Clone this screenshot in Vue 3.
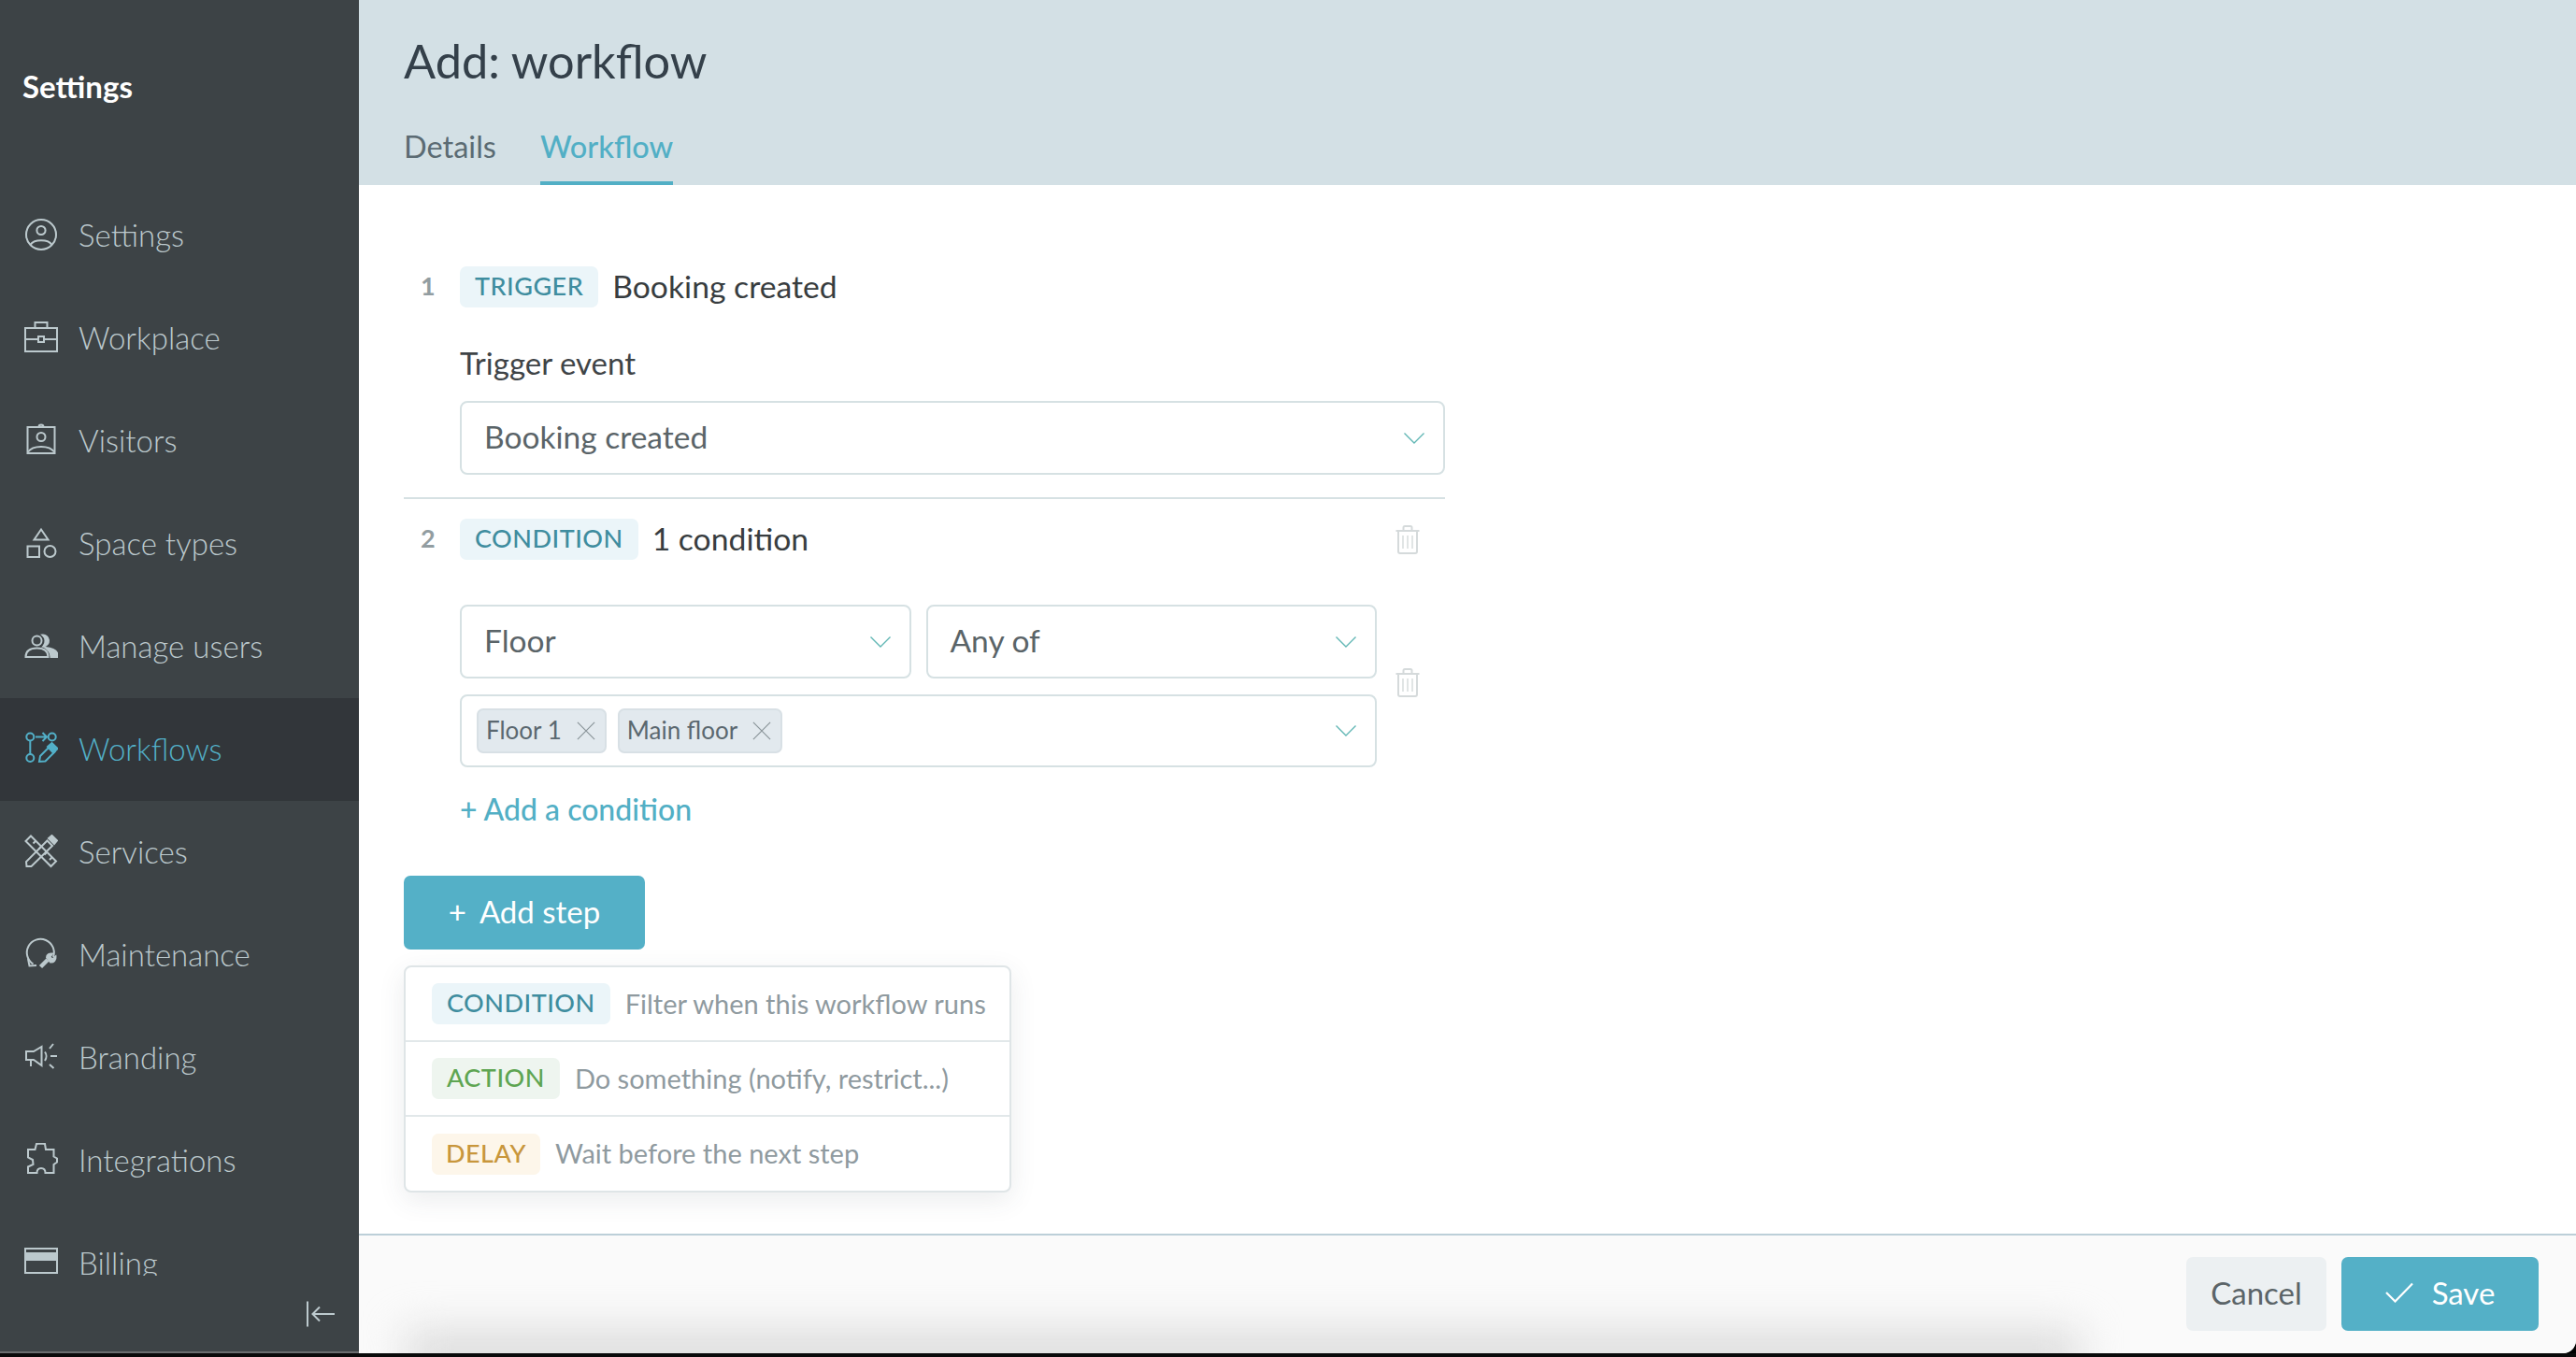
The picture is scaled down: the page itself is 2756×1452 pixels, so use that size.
<script setup>
const circle = (cx, cy, r) => `M${cx - r} ${cy}a${r} ${r} 0 1 0 ${2 * r} 0a${r} ${r} 0 1 0 ${-2 * r} 0Z`

const navItems = [
  { label: 'Settings', paths: [{ d: circle(18, 18, 16) }, { d: circle(18, 13.5, 4.6) }, { d: 'M6.5 29C10 22.5 26 22.5 29.5 29' }] },
  { label: 'Workplace', paths: [{ d: 'M1 8H35V33H1Z' }, { d: 'M11.5 8V2H24.5V8' }, { d: 'M1 20H15M21 20H35' }, { d: 'M15 17H21V23H15Z' }] },
  { label: 'Visitors', paths: [{ d: 'M3.5 4H32.5V32H3.5Z' }, { d: 'M15.5 4a2.5 2.5 0 0 1 5 0' }, { d: circle(18, 14.5, 4.5) }, { d: 'M4 30.5C9 23 27 23 32 30.5' }] },
  { label: 'Space types', paths: [{ d: 'M18 3.5L25.5 14.5H10.5Z' }, { d: 'M3.5 21.5H16V33H3.5Z' }, { d: circle(27.5, 27, 6) }] },
  { label: 'Manage users', paths: [{ d: circle(13.5, 12.5, 5) }, { d: 'M1.5 30C1.5 23 7 20.5 13.5 20.5C20 20.5 25.5 23 25.5 30Z' }, { d: 'M19.5 6.5a6 6 0 0 1 1 12a8.5 8.5 0 0 0 -1 -12Z', filled: true }, { d: 'M22.5 20C31 20.5 36 24 36 30H28.5C28.5 26 26 22.5 22.5 20Z', filled: true }] },
  { label: 'Workflows', active: true, paths: [{ d: circle(6.3, 5.5, 4) }, { d: circle(6.3, 28, 4) }, { d: circle(29.7, 5.5, 4) }, { d: 'M6.3 9.5V24' }, { d: 'M12 5.5H24M19.5 1L24 5.5L19.5 10' }, { d: 'M16 32L17 26L27 16L32.5 21.5L22.5 31.5Z' }, { d: 'M25 16L29.5 12L35.5 18L31 22.5Z', filled: true }] },
  { label: 'Services', paths: [{ d: 'M7 1.5L34 28.5L28.5 34L1.5 7Z' }, { d: 'M9.5 9.5L12.5 6.5M15.5 15.5L18.5 12.5M21.5 21.5L24.5 18.5M27 27L30 24' }, { d: 'M2 29L2.5 34L7.5 34L30 12L24.5 6.5Z' }, { d: 'M26 4L29.5 1L35 6.5L32 10Z', filled: true }] },
  { label: 'Maintenance', paths: [{ d: 'M9.5 28.5A14.5 14.5 0 1 1 31 21' }, { d: 'M4 23L5.5 30.5L13 30' }, { d: 'M17.5 31.5L25 24', wide: true }, { d: 'M24 21.5C24 18.5 27 17 30 17.5L27.5 21L30 23.5L33.5 20.5C34 24 31.5 27 28 26.5Z', filled: true }] },
  { label: 'Branding', paths: [{ d: 'M2 12H10L18.5 7V27L10 21H2Z' }, { d: 'M7 21V28' }, { d: 'M22 12.5C24 15 24 19 22 22' }, { d: 'M27 9L31 4M28 17H35M27 26L31.5 30' }] },
  { label: 'Integrations', paths: [{ d: 'M4 7H11.5L13 1L18 0.5L22 1L23 7H31.5V14.5L35 16.5V20.5L31.5 23V32H22.5C22.5 28 20.5 27 18 27C15.5 27 13.5 28 13.5 32H4V25.5L9.5 23L9 18L4 15.5Z' }] },
  { label: 'Billing', paths: [{ d: 'M1 3H35V29H1Z' }, { d: 'M1 8H35V15H1Z', filled: true }] },
]

const menu = [
  { tag: 'CONDITION', kind: 'condition', text: 'Filter when this workflow runs' },
  { tag: 'ACTION', kind: 'action', text: 'Do something (notify, restrict...)' },
  { tag: 'DELAY', kind: 'delay', text: 'Wait before the next step' },
]

const tags = ['Floor 1', 'Main floor']
</script>

<template>
  <div class="page">
    <div class="frame">
      <aside class="sidebar">
        <div class="brand">Settings</div>
        <nav class="nav">
          <a v-for="item in navItems" :key="item.label" class="nav-row" :class="{ active: item.active }">
            <svg class="nav-icon" viewBox="0 0 36 36" fill="none" stroke="currentColor" stroke-width="2">
              <path
                v-for="(p, i) in item.paths"
                :key="i"
                :d="p.d"
                :fill="p.filled ? 'currentColor' : 'none'"
                :stroke-width="p.wide ? 4.5 : 2"
              />
            </svg>
            <span>{{ item.label }}</span>
          </a>
        </nav>
        <div class="collapse">
          <svg width="30" height="28" viewBox="0 0 30 28" fill="none" stroke="#bcc9cd" stroke-width="2">
            <path d="M1 0.5V27.5" />
            <path d="M30 14H7M14 6.5L6.5 14L14 21.5" />
          </svg>
        </div>
      </aside>

      <main class="main">
        <header class="head">
          <h1 class="title">Add: workflow</h1>
          <div class="tabs">
            <span class="tab">Details</span>
            <span class="tab current">Workflow</span>
          </div>
        </header>

        <section class="content">
          <div class="step-head">
            <span class="num">1</span>
            <span class="badge condition">TRIGGER</span>
            <span class="step-title">Booking created</span>
          </div>
          <div class="step-body">
            <div class="label">Trigger event</div>
            <div class="select wide-select">
              <span>Booking created</span>
              <svg class="chev" viewBox="0 0 22 12" fill="none" stroke="#62b7b5" stroke-width="1.4"><path d="M0.5 0.5L11 11L21.5 0.5" /></svg>
            </div>
          </div>

          <div class="divider"></div>

          <div class="step-head">
            <span class="num">2</span>
            <span class="badge condition">CONDITION</span>
            <span class="step-title">1 condition</span>
            <svg class="trash head-trash" viewBox="0 0 26 31" fill="none" stroke="#d5dadb" stroke-width="2">
              <path d="M0.5 6H25.5M8.5 6V2.5a1.5 1.5 0 0 1 1.5 -1.5H16a1.5 1.5 0 0 1 1.5 1.5V6M3 6V28a2 2 0 0 0 2 2H21a2 2 0 0 0 2 -2V6" />
              <path d="M8 11V25M13 11V25M18 11V25" stroke-width="1.4" />
            </svg>
          </div>

          <div class="cond-wrap">
            <div class="cond">
              <div class="cond-row">
                <div class="select grow">
                  <span>Floor</span>
                  <svg class="chev" viewBox="0 0 22 12" fill="none" stroke="#62b7b5" stroke-width="1.4"><path d="M0.5 0.5L11 11L21.5 0.5" /></svg>
                </div>
                <div class="select grow">
                  <span>Any of</span>
                  <svg class="chev" viewBox="0 0 22 12" fill="none" stroke="#62b7b5" stroke-width="1.4"><path d="M0.5 0.5L11 11L21.5 0.5" /></svg>
                </div>
              </div>
              <div class="select tags-select">
                <div class="tags">
                  <span v-for="t in tags" :key="t" class="tag">
                    <span class="tag-text">{{ t }}</span>
                    <svg class="tag-x" viewBox="0 0 22 22" fill="none" stroke="#8a9499" stroke-width="1.3"><path d="M1 1L21 21M21 1L1 21" /></svg>
                  </span>
                </div>
                <svg class="chev" viewBox="0 0 22 12" fill="none" stroke="#62b7b5" stroke-width="1.4"><path d="M0.5 0.5L11 11L21.5 0.5" /></svg>
              </div>
              <div class="add-cond">+ Add a condition</div>
            </div>
            <svg class="trash row-trash" viewBox="0 0 26 31" fill="none" stroke="#d5dadb" stroke-width="2">
              <path d="M0.5 6H25.5M8.5 6V2.5a1.5 1.5 0 0 1 1.5 -1.5H16a1.5 1.5 0 0 1 1.5 1.5V6M3 6V28a2 2 0 0 0 2 2H21a2 2 0 0 0 2 -2V6" />
              <path d="M8 11V25M13 11V25M18 11V25" stroke-width="1.4" />
            </svg>
          </div>

          <button class="btn add-step"><span class="plus">+</span>Add step</button>

          <div class="menu">
            <div v-for="m in menu" :key="m.tag" class="menu-row">
              <span class="badge" :class="m.kind">{{ m.tag }}</span>
              <span class="menu-text">{{ m.text }}</span>
            </div>
          </div>
        </section>

        <footer class="foot">
          <button class="btn cancel">Cancel</button>
          <button class="btn save">
            <svg class="check" viewBox="0 0 30 22" fill="none" stroke="#fff" stroke-width="2.2"><path d="M1 11L10.5 20.5L29 1.5" /></svg>
            Save
          </button>
        </footer>
      </main>
    </div>
    <div class="strip"></div>
  </div>
</template>

<style>
html, body { margin: 0; height: 100%; overflow: hidden; background: #000; }
</style>

<style scoped>
.page {
  width: 2756px;
  height: 1452px;
  display: flex;
  flex-direction: column;
  font-family: Lato, "Liberation Sans", sans-serif;
  color: #34393c;
  overflow: hidden;
}
.frame { flex: 1; min-height: 0; display: flex; border-bottom-right-radius: 14px; overflow: hidden; }
.strip { height: 4px; flex: none; background: #0a0a0a; }

.sidebar {
  width: 384px;
  flex: none;
  background: #3d4346;
  display: flex;
  flex-direction: column;
  border-bottom: 2px solid #6a6d6f;
  box-sizing: border-box;
}
.brand {
  height: 197px;
  flex: none;
  box-sizing: border-box;
  padding: 68px 0 0 24px;
  font-size: 33px;
  line-height: 48px;
  font-weight: 700;
  color: #fff;
}
.nav { height: 1168px; flex: none; overflow: hidden; }
.nav-row {
  height: 110px;
  box-sizing: border-box;
  padding: 0 0 2px 26px;
  display: flex;
  align-items: center;
  gap: 22px;
  font-size: 33px;
  font-weight: 300;
  color: #bcc9cd;
}
.nav-row.active { background: #32363a; color: #52b0c8; }
.nav-icon { width: 36px; height: 36px; flex: none; }
.collapse { flex: 1; display: flex; justify-content: flex-end; padding: 27px 26px 0 0; }

.main { flex: 1; min-width: 0; display: flex; flex-direction: column; background: #fff; }
.head { height: 198px; flex: none; box-sizing: border-box; background: #d3e0e5; padding: 0 0 0 48px; }
.title { margin: 0; padding-top: 37px; font-size: 50.5px; line-height: 56px; font-weight: 400; color: #34404a; }
.tabs { display: flex; gap: 47px; margin-top: 34px; }
.tab { height: 71px; box-sizing: border-box; padding-top: 8px; font-size: 32.5px; line-height: 44px; color: #5b6b73; }
.tab.current { color: #52afc5; font-weight: 500; border-bottom: 4px solid #52afc5; }

.content { flex: 1; min-height: 0; padding: 87px 0 0 48px; }
.step-head { display: flex; align-items: center; width: 1114px; height: 44px; }
.num { width: 60px; flex: none; box-sizing: border-box; padding: 0 0 3px 18px; font-size: 27px; font-weight: 700; color: #929da1; }
.badge {
  height: 44px;
  box-sizing: border-box;
  display: inline-flex;
  align-items: center;
  padding: 0 16px 3px;
  border-radius: 7px;
  font-size: 27px;
  font-weight: 500;
  letter-spacing: 0.5px;
  flex: none;
}
.badge.condition { background: #ebf5f9; color: #3f8d9f; }
.badge.action { background: #eef5ef; color: #5ea552; }
.badge.delay { background: #fdf6ea; color: #c8963c; padding: 0 15px 3px; }
.step-title { margin-left: 15px; padding-bottom: 3px; font-size: 33.7px; color: #383d40; }
.trash { width: 26px; height: 31px; flex: none; }
.head-trash { margin-left: auto; margin-right: 27px; }

.step-body { padding-left: 60px; width: 1054px; }
.label { margin-top: 39px; font-size: 33px; line-height: 40px; color: #3f4447; }
.select {
  height: 79px;
  box-sizing: border-box;
  border: 2px solid #d6e1e3;
  border-radius: 8px;
  display: flex;
  align-items: center;
  justify-content: space-between;
  padding: 0 20px 0 24px;
  font-size: 33.5px;
  color: #5a6468;
  background: #fff;
}
.select > span { padding-bottom: 3px; }
.wide-select { margin-top: 21px; }
.chev { width: 22px; height: 12px; flex: none; }
.divider { height: 2px; width: 1114px; background: #d6e1e3; margin: 24px 0 21px; }

.cond-wrap { display: flex; align-items: center; margin: 48px 0 0 60px; }
.cond { width: 981px; flex: none; }
.cond-row { display: flex; gap: 16px; }
.grow { flex: 1; }
.tags-select { margin-top: 17px; height: 78px; padding-left: 16px; }
.tags { display: flex; gap: 12px; }
.tag {
  height: 48px;
  box-sizing: border-box;
  display: inline-flex;
  align-items: center;
  gap: 16px;
  padding: 0 10px 0 8px;
  background: #e2e9ee;
  border: 2px solid #d8e0e5;
  border-radius: 7px;
  font-size: 26px;
  color: #5b6870;
}
.tag-text { padding-bottom: 2px; }
.tag-x { width: 20px; height: 20px; }
.row-trash { margin: 0 0 72px 20px; }
.add-cond { margin-top: 25px; font-size: 32px; line-height: 40px; font-weight: 500; color: #52afc5; }

.btn { border: 0; font-family: inherit; border-radius: 7px; height: 79px; font-size: 33px; padding: 0 0 3px; display: inline-flex; align-items: center; justify-content: center; }
.add-step { width: 258px; margin-top: 51px; background: #54b0c7; color: #fff; display: flex; }
.plus { margin-right: 14px; }

.menu {
  width: 650px;
  box-sizing: border-box;
  margin-top: 17px;
  border: 2px solid #dfe5e7;
  border-radius: 8px;
  background: #fff;
  box-shadow: 0 8px 28px rgba(60, 70, 75, 0.1);
}
.menu-row { height: 80px; box-sizing: border-box; display: flex; align-items: center; gap: 16px; padding-left: 28px; border-bottom: 2px solid #e2e8ea; }
.menu-row:last-child { border-bottom: 0; height: 79px; }
.menu-text { font-size: 29px; padding-bottom: 2px; color: #8f9a9f; }

.foot {
  position: relative;
  height: 128px;
  flex: none;
  box-sizing: border-box;
  border-top: 2px solid #bccfd8;
  background: #fafafa;
  display: flex;
  justify-content: flex-end;
  gap: 16px;
  padding: 23px 40px 0 0;
  overflow: hidden;
}
.foot::before {
  content: "";
  position: absolute;
  left: 50px;
  right: 530px;
  bottom: -25px;
  height: 50px;
  background: #dcdcdc;
  filter: blur(22px);
}
.cancel { position: relative; width: 150px; background: #ecf0f2; color: #5b6468; }
.save { position: relative; width: 211px; background: #54b0c7; color: #fff; gap: 20px; }
.check { width: 30px; height: 22px; }
</style>
